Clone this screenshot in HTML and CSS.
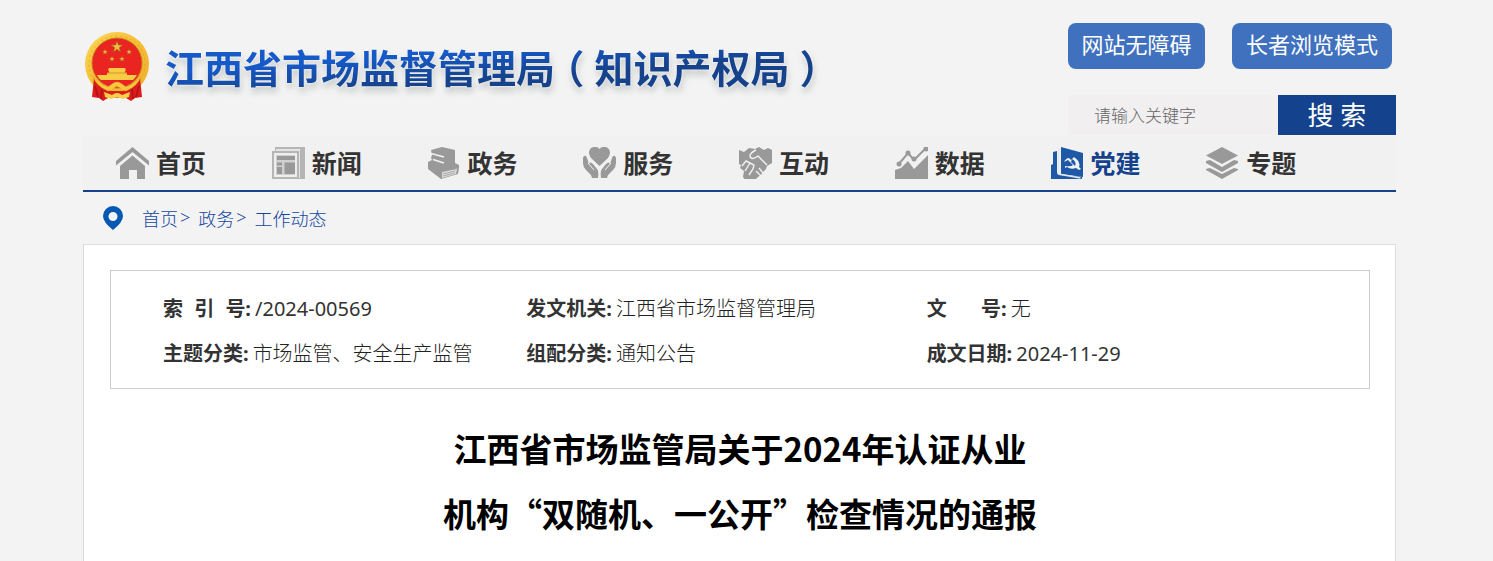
FILE: index.html
```html
<!DOCTYPE html>
<html lang="zh-CN">
<head>
<meta charset="utf-8">
<title>江西省市场监督管理局（知识产权局）</title>
<link rel="stylesheet" href="styles.css">
</head>
<body>
<div class="page">
  <header class="header">
    <a class="brand" href="#">
      <svg class="emblem" viewBox="0 0 66 70" aria-hidden="true">
        <defs>
          <linearGradient id="gold" x1="0" y1="0" x2="1" y2="1"><stop offset="0" stop-color="#fbd95a"/><stop offset=".5" stop-color="#f5bd32"/><stop offset="1" stop-color="#eeb030"/></linearGradient>
          <path id="star" d="M0-5 1.2-1.6 4.8-1.6 1.9.6 3 4 0 1.9-3 4-1.9.6-4.8-1.6-1.2-1.6z"/>
        </defs>
        <circle cx="33" cy="33" r="32" fill="url(#gold)"/>
        <circle cx="33" cy="33" r="28" fill="none" stroke="#e5a528" stroke-width="1" stroke-dasharray="2 3"/>
        <circle cx="33" cy="32" r="25" fill="#ea2521" stroke="#c57a20"/>
        <g fill="#eec044" stroke="#a36219" stroke-width=".5">
          <use href="#star" transform="translate(33 16) scale(1.2)"/>
          <use href="#star" transform="translate(21 21) scale(.55)"/>
          <use href="#star" transform="translate(45 21) scale(.55)"/>
          <use href="#star" transform="translate(28 28) scale(.55)"/>
          <use href="#star" transform="translate(38 28) scale(.55)"/>
        </g>
        <path d="M25 37h16l1 2-1 1v2h2v2H53q-2 3-4 5H17q-3-2-4-5h10v-2h2v-2l-1-1z" fill="#f8cc46"/>
        <path d="M23 42h20" stroke="#d99425"/>
        <path d="M10 47 8 66l7 1 4 3 5-3h18l5 3 4-3 7-1-2-19-8 9-9 4H27l-9-4z" fill="#db1c1b"/>
        <path d="M11 55l3 11M18 58l-1 10M55 55l-3 11M48 58l1 10" fill="none" stroke="#ad1216" stroke-width="1.500"/>
        <path d="M9 45q6 8 15 11l4-3q5-4 10 0l4 3q9-3 15-11-3 10-15 15l-4-1-3-3q-2-1-4 0l-3 3-4 1Q12 55 9 45z" fill="#f7c83e" stroke="#e0a02a" stroke-width=".5"/>
        <path d="M20 61l8 3q5-4 10 0l8-3-1 5-6 2q-6-3-12 0l-6-2z" fill="#f8cf48"/>
      </svg>
      <span class="site-name">江西省市场监督管理局<span class="paren">（</span>知识产权局<span class="paren">）</span></span>
    </a>
    <div class="tools">
      <div class="modes">
        <button class="mode" type="button">网站无障碍</button>
        <button class="mode mode-wide" type="button">长者浏览模式</button>
      </div>
      <form class="search">
        <input class="search-input" type="text" placeholder="请输入关键字" aria-label="请输入关键字">
        <button class="search-button" type="submit">搜 索</button>
      </form>
    </div>
  </header>
  <nav class="nav">
    <a class="nav-item" href="#">
      <svg class="nav-icon" viewBox="0 0 33 32" aria-hidden="true"><path d="M0 14 16.500 0 33 14v4.500L16.500 5 0 18.500z"/><path d="M16.500 8.500 29 19v13h-8v-9h-8v9H4V19z"/></svg>首页</a>
    <a class="nav-item" href="#">
      <svg class="nav-icon" viewBox="0 0 33 32" aria-hidden="true"><path d="M0 4h3V0h30v32H0z" fill="#b5b5b5"/><path d="M4 2h24v29h-1V4H4z" fill="#e4e4e4"/><path d="M2 6h23v24H2z" fill="#eee"/><path d="M4 8h19v20H4z" fill="#d0d0d0"/><path d="M5 9h18v4H5zM5 15.500h5v3H5zM5 20h5v7H5zM12.500 15.500H23V27H12.500z"/></svg>新闻</a>
    <a class="nav-item" href="#">
      <svg class="nav-icon" viewBox="0 0 33 32" aria-hidden="true"><path d="M3 3 14 0l13 3v13l4 2v3L14 25 0 18v-3l4-2-1-2 1-3z"/><path d="M3 6.500 16 10M5 12.500 16 16" fill="none" stroke="#f1f1f1" stroke-width="1.800"/><path d="M0 17l14 7 17-3-1 6-17 5L0 22z"/><path d="M14 25l15-3-1 5-14 4z" fill="#d9d9d9"/><path d="M15 27l12-3M15 29l12-3" stroke="#999" stroke-width=".7"/></svg>政务</a>
    <a class="nav-item" href="#">
      <svg class="nav-icon" viewBox="0 0 33 32" aria-hidden="true"><path d="M16.500 19 8 11Q4 5 8 1q5-3 8.500 1Q20-2 25 1q4 4 0 10z"/><path d="M1 9q2-1 3 2l2 6q1-3 4 0l4 5q2 2 1 9H9l-1-3-5-5Q0 20 0 16V11zM32 9q-2-1-3 2l-2 6q-1-3-4 0l-4 5q-2 2-1 9h6l1-3 5-5q3-3 3-7v-5z"/><path d="M5 16l6 7M28 16l-6 7" stroke="#f1f1f1" stroke-width="1"/></svg>服务</a>
    <a class="nav-item" href="#">
      <svg class="nav-icon" viewBox="0 0 33 32" aria-hidden="true"><path d="M0 3l5 2 5-4 6 1 4-2 5 3 4-2 4 2v13l-5 3-1 3-3 3-2 3-3 2-3 3-3 1-3-1-3 1-3-4 1-6-4-3 1-3-2-1z"/><path d="M17 3q-6 3-6 6 1 5 8 0l9 9M3 19l4-5 4 2 4 2-1 4-4 6M11 16l-5 8M17 24l5 5M20 21l4 5" fill="none" stroke="#f1f1f1" stroke-width="1.400"/></svg>互动</a>
    <a class="nav-item" href="#">
      <svg class="nav-icon" viewBox="0 0 33 32" aria-hidden="true"><path d="M0 23l6-2 7-7 6 8L33 8v24H0z"/><path d="M3 18l10-12 6 7L31 1" fill="none" stroke="#999" stroke-width="2"/><circle cx="4" cy="17" r="2.500"/><circle cx="13" cy="6" r="2.500"/><circle cx="19" cy="12" r="2.500"/><circle cx="31" cy="2" r="2.500"/></svg>数据</a>
    <a class="nav-item nav-item-active" href="#">
      <svg class="nav-icon" viewBox="0 0 33 32" aria-hidden="true"><path d="M0 18l2-1V5l4-1v22l2 2 23 2v2H0zM10 0l22 6v24L10 27z"/><path d="M7.500 1v26l22 4" fill="none" stroke="#dfe6ef" stroke-width="1.500"/><path d="M13 15q2-4 5-4l2 2 3-3q7 5 5 10l2 2-2 1-3-2q-5 2-9-1l-2 1v-2q6 1 8-1l-5-5z" fill="#f1f1f1"/><path d="M21 12q5 3 3 7l-4-4z" fill="#1d59a7"/></svg>党建</a>
    <a class="nav-item" href="#">
      <svg class="nav-icon" viewBox="0 0 33 32" aria-hidden="true"><path d="M16 0l16 8.500L16 17 0 8.500z"/><path d="M0 14l4-1 12 7 12-7 4 1v2l-16 9-16-9zM0 22l4-1 12 6 12-6 4 1v1l-16 9-16-9z"/></svg>专题</a>
  </nav>
  <nav class="crumbs" aria-label="当前位置">
    <svg class="pin" viewBox="0 0 20 24" aria-hidden="true"><path fill-rule="evenodd" d="M10 0a10 10 0 0 1 10 10q0 6-10 14Q0 16 0 10A10 10 0 0 1 10 0zm0 6a4.500 4.500 0 1 0 0 9 4.500 4.500 0 0 0 0-9z"/></svg>
    <span class="crumb"><a href="#">首页</a>&gt;</span>
    <span class="crumb"><a href="#">政务</a>&gt;</span>
    <a href="#">工作动态</a>
  </nav>
  <main class="panel">
    <dl class="meta">
      <div class="field"><dt class="spread">索<span>引</span><span>号:</span></dt><dd class="number">/2024-00569</dd></div>
      <div class="field"><dt>发文机关:</dt><dd>江西省市场监督管理局</dd></div>
      <div class="field"><dt class="spread spread-narrow">文<span>号:</span></dt><dd>无</dd></div>
      <div class="field"><dt>主题分类:</dt><dd>市场监管、安全生产监管</dd></div>
      <div class="field"><dt>组配分类:</dt><dd>通知公告</dd></div>
      <div class="field"><dt>成文日期:</dt><dd class="number">2024-11-29</dd></div>
    </dl>
    <h1 class="title">江西省市场监管局关于2024年认证从业<br>机构“双随机、一公开”检查情况的通报</h1>
  </main>
</div>
</body>
</html>
```
FILE: styles.css
```css
* { box-sizing: border-box; }
body {
  margin: 0;
  background: #f3f3f3;
  color: #333;
  font-family: "Noto Sans", "Noto Sans CJK SC", sans-serif;
}
a { color: inherit; text-decoration: none; }
button, input { font: inherit; border: 0; padding: 0; }
.page {
  display: flex;
  flex-direction: column;
  min-height: 100vh;
  padding: 0 97px 0 83px;
}
.header { display: flex; justify-content: space-between; height: 136px; }
.brand { display: flex; align-items: center; gap: 15px; padding: 0 0 4px 1px; }
.emblem { width: 66px; height: 70px; }
.site-name {
  font-family: "Noto Sans CJK SC", sans-serif;
  font-size: 39px;
  line-height: 72px;
  font-weight: 700;
  white-space: nowrap;
  color: transparent;
  background: linear-gradient(176deg, #1659c8 36%, #15428b 60%);
  background-clip: text;
  -webkit-background-clip: text;
  filter: drop-shadow(0 0 1px #fff) drop-shadow(1px 5px 3px rgba(60, 70, 70, .22));
}
.paren {
  padding: 0 10px;
  font-feature-settings: "halt";
}
.tools { display: flex; flex-direction: column; gap: 26px; padding-top: 23px; width: 328px; }
.modes { display: flex; justify-content: space-between; padding-right: 4px; }
.mode {
  width: 137px;
  height: 46px;
  padding-bottom: 5px;
  border-radius: 8px;
  background: #4071be;
  color: #fff;
  font-size: 22px;
  line-height: 32px;
  white-space: nowrap;
}
.mode-wide { width: 160px; }
.search { display: flex; height: 40px; }
.search-input { flex: 1; min-width: 0; padding: 0 26px; background: #f1eff0; font-size: 17px; font-weight: 300; }
.search-input::placeholder { color: #666; }
.search-button { width: 118px; background: #14428c; color: #fff; font-size: 26px; line-height: 38px; }
.nav {
  display: grid;
  grid-template-columns: repeat(8, 1fr);
  height: 56px;
  padding: 0 34px 0 33px;
  border-bottom: 2px solid #14428c;
  background: #f1f1f1;
}
.nav-item {
  display: flex;
  align-items: center;
  gap: 7px;
  font-size: 25px;
  line-height: 54px;
  font-weight: 700;
  white-space: nowrap;
}
.nav-icon { width: 33px; height: 32px; fill: #999; }
.nav-item-active { color: #14428c; }
.nav-item-active .nav-icon { fill: #1d59a7; }
.crumbs {
  display: flex;
  align-items: center;
  gap: 8px;
  height: 52px;
  padding-left: 20px;
  color: #14479f;
  font-size: 18px;
  font-weight: 300;
}
.crumb { display: flex; gap: 2px; }
.pin { width: 20px; height: 24px; margin-right: 11px; fill: #0658b2; }
.panel {
  flex: 1;
  padding: 25px 25px 0 26px;
  border: 1px solid #ddd;
  border-bottom: 0;
  background: #fff;
}
.meta {
  display: grid;
  grid-template-columns: 363fr 400fr 442fr;
  margin: 0;
  padding: 15px 0 12px 52px;
  border: 1px solid #ccc;
}
.field { display: flex; gap: 4px; font-size: 20px; line-height: 45px; white-space: nowrap; }
.field dt { font-weight: 700; }
.field dd { margin: 0; font-weight: 300; color: #222; }
.field .number { font-weight: 400; color: #333; }
.spread { display: flex; justify-content: space-between; width: 88px; }
.spread-narrow { width: 80px; }
.title {
  margin: 27px 0 0;
  color: #000;
  font-family: "Noto Sans CJK SC", sans-serif;
  font-size: 33px;
  line-height: 65px;
  font-weight: 700;
  text-align: center;
}
```
